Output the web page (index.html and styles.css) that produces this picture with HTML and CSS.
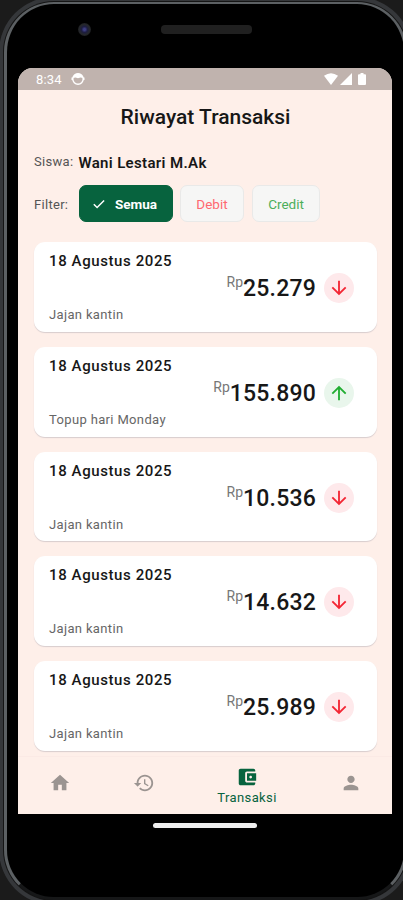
FILE: index.html
```html
<!DOCTYPE html>
<html lang="id">
<head>
    <meta charset="UTF-8">
    <meta name="viewport" content="width=device-width, initial-scale=1.0">
    <title>Riwayat Transaksi</title>
    <link rel="stylesheet" href="styles.css">
</head>
<body>
    <!-- Arrow icons used by the transaction cards -->
    <svg class="sprite" width="0" height="0">
        <symbol id="arrow-down" viewBox="0 0 24 24">
            <path d="M20 12l-1.41-1.41L13 16.17V4h-2v12.17l-5.58-5.59L4 12l8 8z"/>
        </symbol>
        <symbol id="arrow-up" viewBox="0 0 24 24">
            <path d="M4 12l1.41 1.41L11 7.83V20h2V7.83l5.58 5.59L20 12l-8-8z"/>
        </symbol>
    </svg>

    <div class="phone">
        <div class="phone-top">
            <span class="camera"></span>
            <span class="speaker"></span>
        </div>

        <div class="screen">
            <div class="status-bar">
                <span class="time">8:34</span>
                <svg class="status-app" viewBox="0 0 14 14">
                    <circle cx="7" cy="7" r="5.2" fill="none" stroke="#fff" stroke-width="1.4"/>
                    <path d="M2 6Q2.5 1.4 7 1.4T12 6L9.5 5.6L7 6.2L4.5 5.6z" fill="#fff"/>
                    <path d="M0.5 5.5h1.5v2.5h-1.5zM12 5.5h1.5v2.5h-1.5z" fill="#fff"/>
                </svg>
                <div class="status-right">
                    <svg width="14" height="12" viewBox="0 0 14 12"><path d="M0 2.800Q7-2.200 14 2.800L7 12z"/></svg>
                    <svg width="12" height="12" viewBox="0 0 12 12"><path d="M12 0v12H0z"/></svg>
                    <svg class="battery" width="8" height="12" viewBox="0 0 8 12"><path d="M2.500 0h3v1.300H7q1 0 1 1V11q0 1-1 1H1q-1 0-1-1V2.300q0-1 1-1h1.500z"/></svg>
                </div>
            </div>

            <main class="content">
                <h1>Riwayat Transaksi</h1>

                <div class="siswa">
                    <span class="label">Siswa:</span>
                    <strong>Wani Lestari M.Ak</strong>
                </div>

                <div class="filter">
                    <span class="label">Filter:</span>
                    <button type="button" class="chip active">
                        <svg width="14" height="14" viewBox="0 0 14 14"><path d="M1.800 7.300l3.300 3.200 7-7" fill="none" stroke="#fff" stroke-width="1.500"/></svg>
                        <span>Semua</span>
                    </button>
                    <button type="button" class="chip debit">Debit</button>
                    <button type="button" class="chip credit">Credit</button>
                </div>

                <div class="list">
                    <div class="card">
                        <div class="date">18 Agustus 2025</div>
                        <div class="amount">
                            <span class="rp">Rp</span><span class="value">25.279</span>
                            <span class="icon out"><svg><use href="#arrow-down"/></svg></span>
                        </div>
                        <div class="note">Jajan kantin</div>
                    </div>
                    <div class="card">
                        <div class="date">18 Agustus 2025</div>
                        <div class="amount">
                            <span class="rp">Rp</span><span class="value">155.890</span>
                            <span class="icon in"><svg><use href="#arrow-up"/></svg></span>
                        </div>
                        <div class="note">Topup hari Monday</div>
                    </div>
                    <div class="card">
                        <div class="date">18 Agustus 2025</div>
                        <div class="amount">
                            <span class="rp">Rp</span><span class="value">10.536</span>
                            <span class="icon out"><svg><use href="#arrow-down"/></svg></span>
                        </div>
                        <div class="note">Jajan kantin</div>
                    </div>
                    <div class="card">
                        <div class="date">18 Agustus 2025</div>
                        <div class="amount">
                            <span class="rp">Rp</span><span class="value">14.632</span>
                            <span class="icon out"><svg><use href="#arrow-down"/></svg></span>
                        </div>
                        <div class="note">Jajan kantin</div>
                    </div>
                    <div class="card">
                        <div class="date">18 Agustus 2025</div>
                        <div class="amount">
                            <span class="rp">Rp</span><span class="value">25.989</span>
                            <span class="icon out"><svg><use href="#arrow-down"/></svg></span>
                        </div>
                        <div class="note">Jajan kantin</div>
                    </div>
                </div>
            </main>

            <nav class="bottom-nav">
                <a class="nav-item">
                    <svg viewBox="0 0 24 24"><path d="M10 20v-6h4v6h5v-8h3L12 3 2 12h3v8z"/></svg>
                </a>
                <a class="nav-item">
                    <svg viewBox="0 0 24 24"><path d="M13 3c-4.970 0-9 4.030-9 9H1l3.890 3.890.07.14L9 12H6c0-3.870 3.130-7 7-7s7 3.130 7 7-3.130 7-7 7c-1.930 0-3.680-.79-4.940-2.060l-1.420 1.420C8.270 19.990 10.510 21 13 21c4.970 0 9-4.030 9-9s-4.030-9-9-9zm-1 5v5l4.280 2.540.72-1.210-3.500-2.080V8H12z"/></svg>
                </a>
                <a class="nav-item active">
                    <svg viewBox="0 0 24 24"><path d="M21 18v1c0 1.100-.9 2-2 2H5c-1.110 0-2-.9-2-2V5c0-1.100.89-2 2-2h14c1.100 0 2 .9 2 2v1h-9c-1.110 0-2 .9-2 2v8c0 1.100.89 2 2 2h9zm-9-2h10V8H12v8zm4-2.500c-.83 0-1.500-.67-1.500-1.500s.67-1.500 1.500-1.500 1.500.67 1.500 1.500-.67 1.500-1.500 1.500z"/></svg>
                    <span>Transaksi</span>
                </a>
                <a class="nav-item">
                    <svg viewBox="0 0 24 24"><path d="M12 12c2.210 0 4-1.790 4-4s-1.790-4-4-4-4 1.790-4 4 1.790 4 4 4zm0 2c-2.670 0-8 1.340-8 4v2h16v-2c0-2.660-5.330-4-8-4z"/></svg>
                </a>
            </nav>
        </div>

        <div class="home-bar"></div>
    </div>
</body>
</html>
```
FILE: styles.css
```css
* {
    box-sizing: border-box;
}
body {
    margin: 0;
    height: 900px;
    overflow: hidden;
    background-color: #1b1b1b;
    font-family: Roboto, sans-serif;
    color: #171717;
}
svg {
    display: block;
}
.sprite {
    position: absolute;
}

/* Phone frame */
.phone {
    width: 403px;
    height: 898px;
    margin: 2px 0 0 4px;
    padding: 0 10px;
    border: 3px solid #5c6063;
    border-top-width: 2px;
    border-bottom-color: #161718;
    border-radius: 50px;
    background-color: #000;
    box-shadow: 0 0 0 1px #141414, 0 0 0 5px #35373a;
}
.phone-top {
    display: flex;
    align-items: center;
    height: 64px;
    padding: 0 0 13px 61px;
}
.camera {
    width: 13px;
    height: 13px;
    border-radius: 50%;
    background: radial-gradient(circle, #3c3d82 0 1px, #1d1d40 3px, #25272b 5px, #1b1c1f 7px);
}
.speaker {
    width: 91px;
    height: 9px;
    margin-left: 70px;
    border-radius: 4px;
    background-color: #202020;
}
.screen {
    display: flex;
    flex-direction: column;
    width: 374px;
    height: 746px;
    margin-left: 1px;
    border-radius: 15px 15px 0 0;
    background-color: #feefe9;
    overflow: hidden;
}

/* Status bar */
.status-bar {
    display: flex;
    align-items: center;
    flex: none;
    height: 22px;
    padding: 0 26px 0 18px;
    background-color: #c0b3ae;
    color: #fff;
}
.time {
    width: 35px;
    padding-top: 1px;
    font-size: 13px;
    letter-spacing: 0.2px;
}
.status-app {
    width: 14px;
    height: 14px;
}
.status-right {
    display: flex;
    gap: 2px;
    margin-left: auto;
    fill: #fff;
}
.battery {
    margin-left: 4px;
}

/* Content */
.content {
    flex: 1;
    min-height: 0;
    padding: 0 15px 0 16px;
    overflow: hidden;
}
h1 {
    margin: 15px 0 0;
    font-size: 21px;
    font-weight: 500;
    line-height: 25px;
    text-align: center;
}
.label {
    color: #555;
    font-size: 13px;
    letter-spacing: 0.3px;
}
.siswa {
    display: flex;
    align-items: center;
    height: 18px;
    margin-top: 23px;
}
.siswa .label {
    margin-top: -2px;
}
.siswa strong {
    margin-left: 5px;
    padding-top: 1px;
    font-size: 15px;
    font-weight: 600;
    letter-spacing: 0.35px;
}
.filter {
    display: flex;
    align-items: center;
    height: 37px;
    margin-top: 14px;
}
.filter .label {
    width: 45px;
    padding-top: 1px;
}
.chip {
    display: flex;
    align-items: center;
    justify-content: center;
    height: 37px;
    margin-right: 7px;
    padding: 0;
    border: 1px solid #e9e9e8;
    border-radius: 7px;
    background-color: #f6f6f5;
    font-family: inherit;
    font-size: 13.5px;
    letter-spacing: 0;
}
.chip.active {
    gap: 9px;
    width: 94px;
    padding-right: 3px;
    border-color: #07633e;
    background-color: #07633e;
    color: #fff;
    font-weight: 700;
}
.chip.debit {
    width: 64px;
    margin-right: 8px;
    color: #ff6870;
}
.chip.credit {
    width: 68px;
    color: #4cae5b;
}
.list {
    display: grid;
    gap: 15px;
    margin-top: 20px;
}
.card {
    height: 89.8px;
    padding: 10px 23px 0 15px;
    border-radius: 11px;
    background-color: #fff;
    box-shadow: 0 1px 1px #d8cdce;
}
.date {
    height: 18px;
    font-size: 15px;
    font-weight: 500;
    line-height: 19px;
    letter-spacing: 0.6px;
}
.amount {
    display: flex;
    align-items: center;
    justify-content: flex-end;
    height: 36px;
}
.rp {
    align-self: flex-start;
    margin-top: 4px;
    color: #777;
    font-size: 14px;
    line-height: 16px;
}
.value {
    padding-top: 1px;
    font-size: 23px;
    font-weight: 500;
    letter-spacing: 0.2px;
}
.icon {
    display: flex;
    align-items: center;
    justify-content: center;
    width: 30px;
    height: 30px;
    margin-left: 8px;
    border-radius: 50%;
}
.icon svg {
    width: 22px;
    height: 22px;
}
.icon.out {
    background-color: #fee9eb;
    fill: #f32634;
}
.icon.in {
    background-color: #e9f6ec;
    fill: #20ad31;
}
.note {
    height: 16px;
    color: #666;
    font-size: 13px;
    line-height: 18px;
    letter-spacing: 0.35px;
}

/* Bottom navigation */
.bottom-nav {
    display: grid;
    grid-template-columns: 84px 83px 124px 83px;
    flex: none;
    height: 58px;
    border-top: 1px solid #fbeae5;
}
.nav-item {
    display: flex;
    flex-direction: column;
    align-items: center;
    justify-content: center;
    padding-bottom: 5px;
    color: #9b9491;
    fill: currentColor;
}
.nav-item svg {
    width: 22px;
    height: 22px;
}
.nav-item.active {
    padding: 2px 0 0;
    color: #07633e;
}
.nav-item span {
    font-size: 13px;
    line-height: 20px;
    letter-spacing: 0.4px;
}
.home-bar {
    width: 104px;
    height: 5px;
    margin: 9px 0 0 136px;
    border-radius: 3px;
    background-color: #eee;
}
```
